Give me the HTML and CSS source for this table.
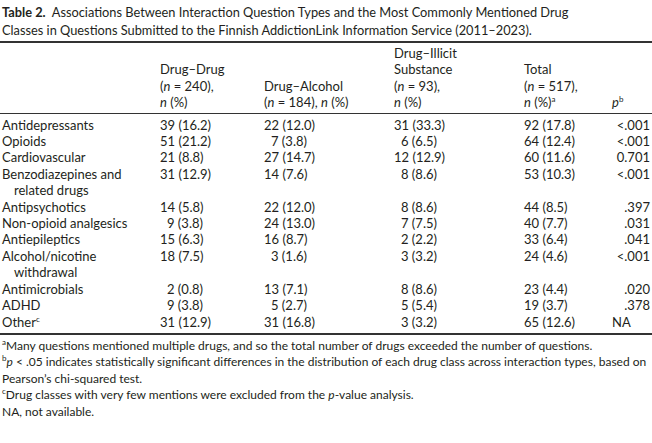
FILE: index.html
```html
<!DOCTYPE html>
<html lang="en">
<head>
    <meta charset="UTF-8">
    <title>Table 2</title>
    <link rel="stylesheet" href="styles.css">
</head>
<body>
    <div class="wrap">
        <p class="caption"><b>Table 2.</b>&nbsp; Associations Between Interaction Question Types and the Most Commonly Mentioned Drug Classes in Questions Submitted to the Finnish AddictionLink Information Service (2011–2023).</p>

        <table class="data">
            <colgroup>
                <col class="c1"><col class="c2"><col class="c3"><col class="c4"><col class="c5"><col class="c6">
            </colgroup>
            <thead>
                <tr>
                    <th></th>
                    <th>Drug–Drug<br>(<i>n</i> = 240),<br><i>n</i> (%)</th>
                    <th>Drug–Alcohol<br>(<i>n</i> = 184), <i>n</i> (%)</th>
                    <th>Drug–Illicit<br>Substance<br>(<i>n</i> = 93),<br><i>n</i> (%)</th>
                    <th>Total<br>(<i>n</i> = 517),<br><i>n</i> (%)<sup>a</sup></th>
                    <th><i>p</i><sup>b</sup></th>
                </tr>
            </thead>
            <tbody>
                <tr><td>Antidepressants</td><td>39 (16.2)</td><td>22 (12.0)</td><td>31 (33.3)</td><td>92 (17.8)</td><td class="p">&lt;.001</td></tr>
                <tr><td>Opioids</td><td>51 (21.2)</td><td class="pad">7 (3.8)</td><td class="pad">6 (6.5)</td><td>64 (12.4)</td><td class="p">&lt;.001</td></tr>
                <tr><td>Cardiovascular</td><td>21 (8.8)</td><td>27 (14.7)</td><td>12 (12.9)</td><td>60 (11.6)</td><td class="p">0.701</td></tr>
                <tr><td>Benzodiazepines and<br><span class="ind">related drugs</span></td><td>31 (12.9)</td><td>14 (7.6)</td><td class="pad">8 (8.6)</td><td>53 (10.3)</td><td class="p">&lt;.001</td></tr>
                <tr><td>Antipsychotics</td><td>14 (5.8)</td><td>22 (12.0)</td><td class="pad">8 (8.6)</td><td>44 (8.5)</td><td class="p">.397</td></tr>
                <tr><td>Non-opioid analgesics</td><td class="pad">9 (3.8)</td><td>24 (13.0)</td><td class="pad">7 (7.5)</td><td>40 (7.7)</td><td class="p">.031</td></tr>
                <tr><td>Antiepileptics</td><td>15 (6.3)</td><td>16 (8.7)</td><td class="pad">2 (2.2)</td><td>33 (6.4)</td><td class="p">.041</td></tr>
                <tr><td>Alcohol/nicotine<br><span class="ind">withdrawal</span></td><td>18 (7.5)</td><td class="pad">3 (1.6)</td><td class="pad">3 (3.2)</td><td>24 (4.6)</td><td class="p">&lt;.001</td></tr>
                <tr><td>Antimicrobials</td><td class="pad">2 (0.8)</td><td>13 (7.1)</td><td class="pad">8 (8.6)</td><td>23 (4.4)</td><td class="p">.020</td></tr>
                <tr><td>ADHD</td><td class="pad">9 (3.8)</td><td class="pad">5 (2.7)</td><td class="pad">5 (5.4)</td><td>19 (3.7)</td><td class="p">.378</td></tr>
                <tr><td>Other<sup>c</sup></td><td>31 (12.9)</td><td>31 (16.8)</td><td class="pad">3 (3.2)</td><td>65 (12.6)</td><td class="na">NA</td></tr>
            </tbody>
        </table>

        <div class="notes">
            <p><sup>a</sup>Many questions mentioned multiple drugs, and so the total number of drugs exceeded the number of questions.</p>
            <p><sup>b</sup><i>p</i> &lt; .05 indicates statistically significant differences in the distribution of each drug class across interaction types, based on Pearson’s chi-squared test.</p>
            <p><sup>c</sup>Drug classes with very few mentions were excluded from the <i>p</i>-value analysis.</p>
            <p>NA, not available.</p>
        </div>
    </div>
</body>
</html>
```

FILE: styles.css
```css
* {
    padding: 0;
    margin: 0;
}
body {
    background: #fff;
    color: #231f20;
    font-family: Lato, "Open Sans", sans-serif;
    font-size: 13px;
}
.wrap {
    width: 652px;
}

.caption {
    width: 600px;
    padding: 3px 2px 0;
    font-size: 12.8px;
    line-height: 18px;
    height: 38px;
}

.data {
    width: 652px;
    border-collapse: collapse;
    border-top: 2px solid #333;
    border-bottom: 2px solid #333;
    line-height: 16.4px;
}
.data .c1 { width: 160px; }
.data .c2 { width: 104px; }
.data .c3 { width: 130px; }
.data .c4 { width: 130px; }
.data .c5 { width: 88px; }
.data .c6 { width: 40px; }

.data th {
    font-weight: normal;
    text-align: left;
    vertical-align: bottom;
    padding: 2px 0 2px;
}
.data thead tr {
    border-bottom: 1px solid #333;
}
.data tbody tr:first-child td {
    padding-top: 3px;
}
.data tbody tr:last-child td {
    padding-bottom: 3px;
}
.data td {
    vertical-align: top;
    white-space: nowrap;
}
.data td:first-child {
    padding-left: 2px;
}
.data .ind {
    padding-left: 12px;
}
.data .pad {
    padding-left: 7px;
}
.data .p {
    text-align: right;
    padding-right: 2px;
}

sup {
    font-size: 8px;
    line-height: 0;
    vertical-align: 5px;
}

.notes {
    padding: 3px 2px 0;
    font-size: 12px;
    line-height: 16.5px;
}
```
